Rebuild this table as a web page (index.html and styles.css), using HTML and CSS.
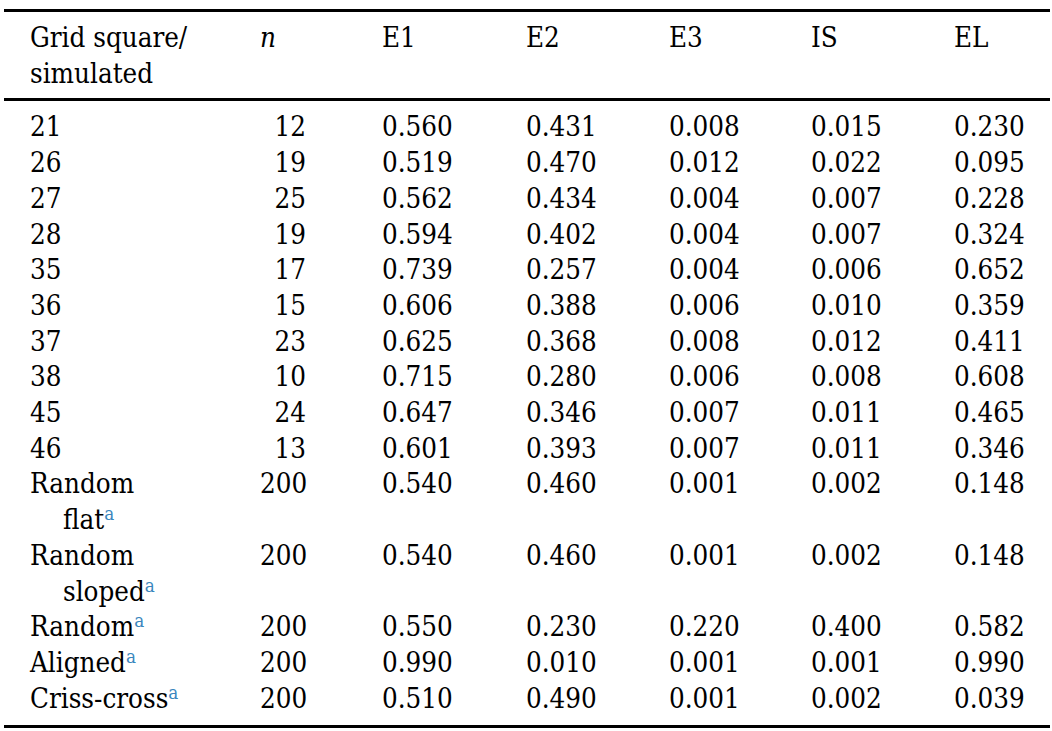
FILE: index.html
```html
<!DOCTYPE html>
<html>
<head>
<meta charset="utf-8">
<link rel="stylesheet" href="styles.css">
</head>
<body>
<table class="data">
  <colgroup>
    <col class="c-name">
    <col class="c-n">
    <col class="c-v">
    <col class="c-v2">
    <col class="c-v3">
    <col class="c-v2">
    <col class="c-last">
  </colgroup>
  <thead>
    <tr>
      <th class="name">Grid square/<br>simulated</th>
      <th class="n"><i>n</i></th>
      <th>E1</th>
      <th>E2</th>
      <th>E3</th>
      <th>IS</th>
      <th>EL</th>
    </tr>
  </thead>
  <tbody>
    <tr class="first"><td class="name">21</td><td class="num">12</td><td>0.560</td><td>0.431</td><td>0.008</td><td>0.015</td><td>0.230</td></tr>
    <tr><td class="name">26</td><td class="num">19</td><td>0.519</td><td>0.470</td><td>0.012</td><td>0.022</td><td>0.095</td></tr>
    <tr><td class="name">27</td><td class="num">25</td><td>0.562</td><td>0.434</td><td>0.004</td><td>0.007</td><td>0.228</td></tr>
    <tr><td class="name">28</td><td class="num">19</td><td>0.594</td><td>0.402</td><td>0.004</td><td>0.007</td><td>0.324</td></tr>
    <tr><td class="name">35</td><td class="num">17</td><td>0.739</td><td>0.257</td><td>0.004</td><td>0.006</td><td>0.652</td></tr>
    <tr><td class="name">36</td><td class="num">15</td><td>0.606</td><td>0.388</td><td>0.006</td><td>0.010</td><td>0.359</td></tr>
    <tr><td class="name">37</td><td class="num">23</td><td>0.625</td><td>0.368</td><td>0.008</td><td>0.012</td><td>0.411</td></tr>
    <tr><td class="name">38</td><td class="num">10</td><td>0.715</td><td>0.280</td><td>0.006</td><td>0.008</td><td>0.608</td></tr>
    <tr><td class="name">45</td><td class="num">24</td><td>0.647</td><td>0.346</td><td>0.007</td><td>0.011</td><td>0.465</td></tr>
    <tr><td class="name">46</td><td class="num">13</td><td>0.601</td><td>0.393</td><td>0.007</td><td>0.011</td><td>0.346</td></tr>
    <tr><td class="name">Random<br><span class="hang">flat<sup class="fn">a</sup></span></td><td class="num">200</td><td>0.540</td><td>0.460</td><td>0.001</td><td>0.002</td><td>0.148</td></tr>
    <tr><td class="name">Random<br><span class="hang">sloped<sup class="fn">a</sup></span></td><td class="num">200</td><td>0.540</td><td>0.460</td><td>0.001</td><td>0.002</td><td>0.148</td></tr>
    <tr><td class="name">Random<sup class="fn">a</sup></td><td class="num">200</td><td>0.550</td><td>0.230</td><td>0.220</td><td>0.400</td><td>0.582</td></tr>
    <tr><td class="name">Aligned<sup class="fn">a</sup></td><td class="num">200</td><td>0.990</td><td>0.010</td><td>0.001</td><td>0.001</td><td>0.990</td></tr>
    <tr class="last"><td class="name">Criss-cross<sup class="fn">a</sup></td><td class="num">200</td><td>0.510</td><td>0.490</td><td>0.001</td><td>0.002</td><td>0.039</td></tr>
  </tbody>
</table>
</body>
</html>
```

FILE: styles.css
```css
html, body {
  margin: 0;
  padding: 0;
  background: #ffffff;
}

body {
  padding: 9px 0 0 4px;
  font-family: "DejaVu Serif", "Liberation Serif", serif;
  font-stretch: condensed;
  font-size: 27.5px;
  color: #000000;
}

.data {
  border-collapse: collapse;
  table-layout: fixed;
  width: 1046px;
  line-height: 35.7px;
}

.c-name { width: 256px; }
.c-n { width: 122px; }
.c-v { width: 144px; }
.c-v2 { width: 143px; }
.c-v3 { width: 142px; }
.c-last { width: 96px; }

.data th,
.data td {
  box-sizing: border-box;
  padding: 0;
  text-align: left;
  vertical-align: top;
  font-weight: normal;
  white-space: nowrap;
}

.data thead th {
  border-top: 3px solid #000000;
  border-bottom: 3px solid #000000;
  padding-top: 8px;
  padding-bottom: 7px;
}

.data .name {
  padding-left: 26px;
}

.data td.num {
  text-align: right;
  padding-right: 76px;
}

.data tr.first td {
  padding-top: 8px;
}

.data tr.last td {
  padding-bottom: 9px;
  border-bottom: 3px solid #000000;
}

.hang {
  padding-left: 33px;
}

.fn {
  color: #3a86bd;
  font-size: 68%;
  line-height: 0;
  vertical-align: 0.5em;
}
```
